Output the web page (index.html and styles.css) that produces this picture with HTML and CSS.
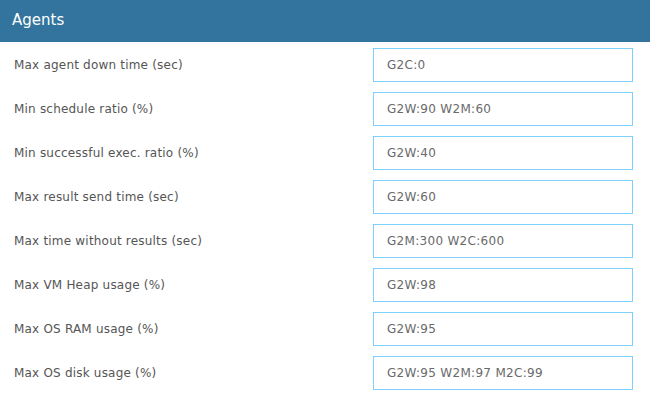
FILE: index.html
```html
<!DOCTYPE html>
<html lang="en">
<head>
    <meta charset="UTF-8">
    <title>Agents</title>
    <link rel="stylesheet" href="styles.css">
</head>
<body>
    <div class="panel">
        <div class="panel-header">
            <h2>Agents</h2>
        </div>
        <form class="panel-body">
            <div class="form-row">
                <label for="downTime">Max agent down time (sec)</label>
                <input type="text" id="downTime" value="G2C:0">
            </div>
            <div class="form-row">
                <label for="scheduleRatio">Min schedule ratio (%)</label>
                <input type="text" id="scheduleRatio" value="G2W:90 W2M:60">
            </div>
            <div class="form-row">
                <label for="execRatio">Min successful exec. ratio (%)</label>
                <input type="text" id="execRatio" value="G2W:40">
            </div>
            <div class="form-row">
                <label for="sendTime">Max result send time (sec)</label>
                <input type="text" id="sendTime" value="G2W:60">
            </div>
            <div class="form-row">
                <label for="noResults">Max time without results (sec)</label>
                <input type="text" id="noResults" value="G2M:300 W2C:600">
            </div>
            <div class="form-row">
                <label for="heap">Max VM Heap usage (%)</label>
                <input type="text" id="heap" value="G2W:98">
            </div>
            <div class="form-row">
                <label for="ram">Max OS RAM usage (%)</label>
                <input type="text" id="ram" value="G2W:95">
            </div>
            <div class="form-row">
                <label for="disk">Max OS disk usage (%)</label>
                <input type="text" id="disk" value="G2W:95 W2M:97 M2C:99">
            </div>
        </form>
    </div>
</body>
</html>
```

FILE: styles.css
```css
* {
    margin: 0;
    padding: 0;
    box-sizing: border-box;
}

body {
    font-family: 'DejaVu Sans', sans-serif;
    background: #fff;
    color: #444;
}

.panel {
    width: 650px;
}

.panel-header {
    background: #33749e;
    height: 42px;
    display: flex;
    align-items: center;
    padding: 0 12px 2px;
}

.panel-header h2 {
    color: #fff;
    font-size: 15px;
    font-weight: 400;
}

.panel-body {
    padding: 1px 17px 0 14px;
}

.form-row {
    display: flex;
    align-items: center;
    justify-content: space-between;
    height: 44px;
}

label {
    font-size: 12px;
    letter-spacing: 0.2px;
    color: #555;
}

input {
    width: 260px;
    height: 34px;
    border: 1px solid #7fcfff;
    padding: 0 13px;
    font-family: inherit;
    font-size: 12px;
    letter-spacing: 0.3px;
    color: #6a6a6a;
    outline: none;
}
```
